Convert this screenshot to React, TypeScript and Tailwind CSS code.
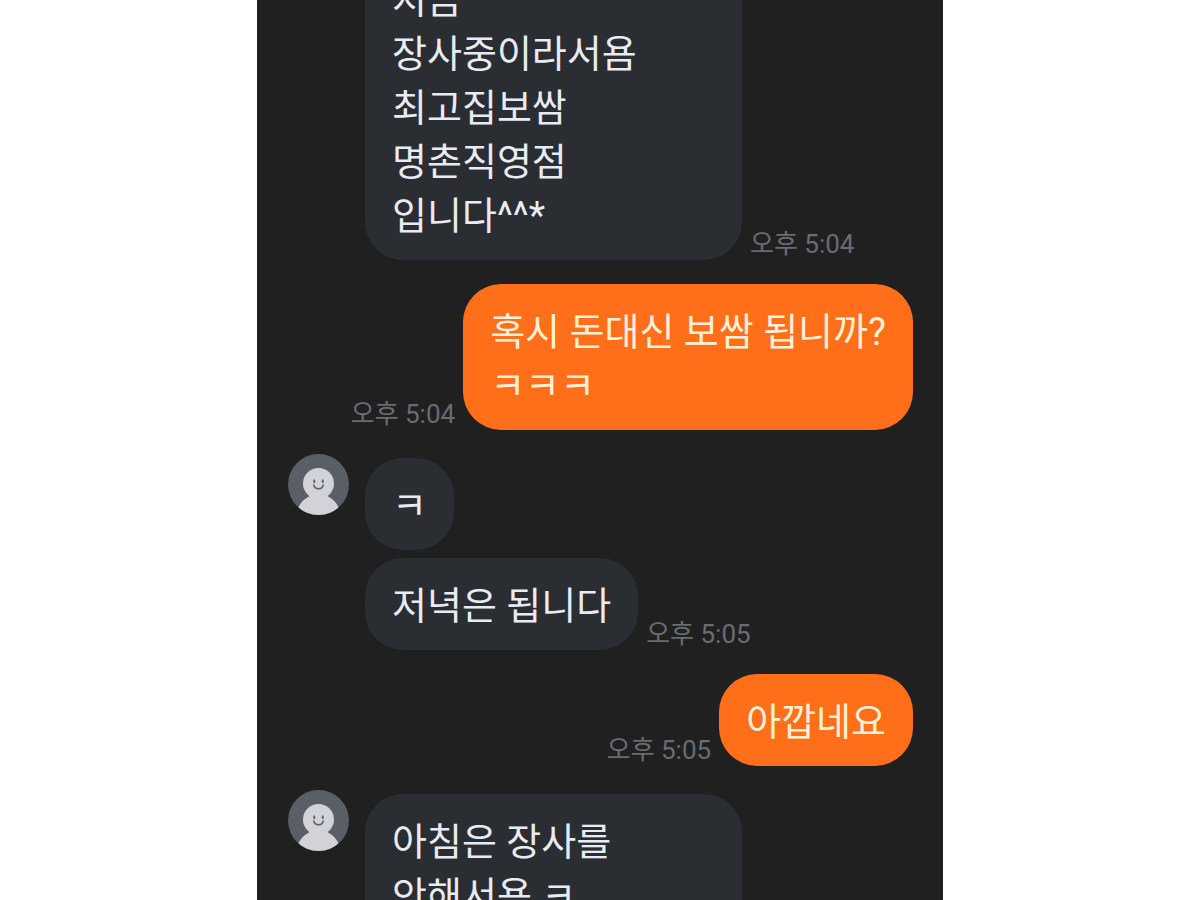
import React from 'react';
import clsx from 'clsx';

type Message = {
  id: number;
  lines: string[];
  time?: string;
  wide?: boolean;
};

type Group = {
  id: number;
  mine?: boolean;
  avatar?: boolean;
  messages: Message[];
};

const groups: Group[] = [
  {
    id: 1,
    messages: [
      {
        id: 1,
        lines: ['지금', '장사중이라서욤', '최고집보쌈', '명촌직영점', '입니다^^*'],
        time: '오후 5:04',
        wide: true,
      },
    ],
  },
  {
    id: 2,
    mine: true,
    messages: [{ id: 2, lines: ['혹시 돈대신 보쌈 됩니까?', 'ㅋㅋㅋ'], time: '오후 5:04' }],
  },
  {
    id: 3,
    avatar: true,
    messages: [
      { id: 3, lines: ['ㅋ'] },
      { id: 4, lines: ['저녁은 됩니다'], time: '오후 5:05' },
    ],
  },
  {
    id: 4,
    mine: true,
    messages: [{ id: 5, lines: ['아깝네요'], time: '오후 5:05' }],
  },
  {
    id: 5,
    avatar: true,
    messages: [{ id: 6, lines: ['아침은 장사를', '안해서욤 ㅋ'], wide: true }],
  },
];

const Avatar: React.FC<{ clipId: string }> = ({ clipId }) => (
  <svg viewBox="0 0 61 61" className="w-full" aria-hidden="true">
    <clipPath id={clipId}>
      <circle cx="30.5" cy="30.5" r="30.5" />
    </clipPath>
    <g clipPath={`url(#${clipId})`}>
      <rect width="61" height="61" fill="#5a5e66" />
      <path d="M8 61C10 51 15 45.5 21 42.5Q22.5 41.5 21.5 39H39.5Q38.5 41.5 40 42.5C46 45.5 51 51 53 61Z" fill="#d2d3d8" />
      <circle cx="30.5" cy="29.5" r="15.5" fill="#d2d3d8" />
    </g>
    <ellipse cx="26.3" cy="27.2" rx="1" ry="2" fill="#5a5e66" />
    <ellipse cx="34.7" cy="27.2" rx="1" ry="2" fill="#5a5e66" />
    <path d="M25.8 31C27 36 34 36 35.2 31" fill="none" stroke="#5a5e66" strokeWidth="1.5" strokeLinecap="round" />
  </svg>
);

const Bubble: React.FC<{ message: Message; mine?: boolean }> = ({ message, mine }) => (
  <div className={clsx('flex items-end gap-2', mine && 'flex-row-reverse')}>
    <div
      className={clsx(
        'rounded-[38px] px-[27px] pt-[21px] pb-[17px] text-[38px] leading-[54px]',
        mine ? 'bg-[#ff6f1a] text-[#fff0d8]' : 'bg-[#2a2d32] text-[#e9ebf2]',
        message.wide && 'w-[377px]'
      )}
    >
      {message.lines.map(line => (
        <p key={line} className="whitespace-nowrap">{line}</p>
      ))}
    </div>
    {message.time && (
      <time className="shrink-0 pb-px text-[26px] leading-[30px] text-[#6a6b73]">{message.time}</time>
    )}
  </div>
);

export default function App() {
  return (
    <div className="h-screen overflow-hidden bg-white font-[Roboto,'Noto_Sans_CJK_KR',sans-serif]">
      <main className="mx-auto h-full max-w-[686px] overflow-hidden bg-[#202020] pr-[30px] pl-[31px]">
        {/* Scrolled part way into the conversation */}
        <div className="-mt-12 flex flex-col gap-6">
          {groups.map(group => (
            <section key={group.id} className={clsx('flex gap-4', group.mine && 'justify-end')}>
              {!group.mine && (
                <div className="w-[61px] shrink-0">
                  {group.avatar && <Avatar clipId={`avatar-${group.id}`} />}
                </div>
              )}
              <div className={clsx('flex flex-col gap-2', group.avatar && 'pt-1')}>
                {group.messages.map(message => (
                  <Bubble key={message.id} message={message} mine={group.mine} />
                ))}
              </div>
            </section>
          ))}
        </div>
      </main>
    </div>
  );
}
